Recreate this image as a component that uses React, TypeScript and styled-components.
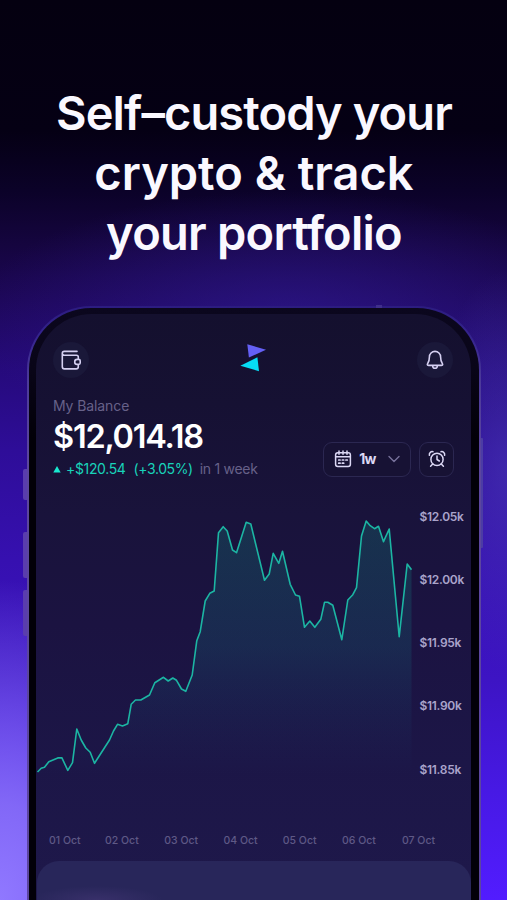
import React from "react";
import styled, { createGlobalStyle } from "styled-components";

const GlobalStyle = createGlobalStyle`
  * { box-sizing: border-box; }
  body {
    margin: 0;
    background: #040010;
    font-family: Inter, "Liberation Sans", sans-serif;
  }
`;

const Page = styled.main`
  width: 507px;
  height: 900px;
  overflow: hidden;
  display: flex;
  flex-direction: column;
  align-items: center;
  background:
    radial-gradient(ellipse 210px 320px at 0 900px, #9078ff 0%, rgba(136, 112, 248, 0.9) 30%, rgba(110, 80, 230, 0) 100%),
    radial-gradient(ellipse 80px 200px at 507px 470px, rgba(80, 70, 190, 0.45), rgba(80, 70, 190, 0)),
    radial-gradient(ellipse 320px 130px at 290px 320px, rgba(48, 26, 150, 0.65), rgba(48, 26, 150, 0)),
    linear-gradient(180deg, #040010 0, #050014 130px, #0b0228 190px, #15053f 245px, #1d0758 300px, #260a7c 370px, #2e0d98 450px, #3610b0 560px, #3d14c4 680px, #4719e4 790px, #521cff 900px);
`;

const Headline = styled.h1`
  margin: 83px 0 0;
  height: 223px;
  flex: none;
  display: flex;
  flex-direction: column;
  align-items: center;
  color: #faf8ff;
  font-size: 47px;
  font-weight: 600;
  line-height: 60px;
  white-space: nowrap;
`;

const HeadlineLine = styled.span<{ $spacing: number }>`
  padding-left: 1px;
  letter-spacing: ${(p) => p.$spacing}px;
`;

const Phone = styled.section`
  position: relative;
  width: 454px;
  height: 640px;
  flex: none;
  padding: 5.5px 7.5px 0;
  border: 2px solid transparent;
  border-bottom: 0;
  border-radius: 64px 64px 0 0;
  background:
    linear-gradient(180deg, #0b071e 0, #090518 60px, #020008 130px) padding-box,
    linear-gradient(180deg, #2c1c80 0, #35248e 30px, #4c3a9a 75px, #5c459f 160px) border-box;
`;

const SideKey = styled.i<{ $top: number; $height: number; $right?: boolean }>`
  position: absolute;
  top: ${(p) => p.$top}px;
  ${(p) => (p.$right ? "right: -4px;" : "left: -6px;")}
  width: ${(p) => (p.$right ? 2 : 4)}px;
  height: ${(p) => p.$height}px;
  border-radius: ${(p) => (p.$right ? "0 1px 1px 0" : "2px 0 0 2px")};
  background: ${(p) => (p.$right ? "#4c3ca4" : "#5a3dae")};
`;

const Antenna = styled.i`
  position: absolute;
  top: -3px;
  left: 347px;
  width: 6px;
  height: 3px;
  background: #3f2f8c;
`;

const Screen = styled.div`
  height: 100%;
  display: flex;
  flex-direction: column;
  overflow: hidden;
  border-radius: 56px 56px 0 0;
  background: linear-gradient(180deg, #14102e 0, #161133 90px, #19133b 200px, #1b1341 310px, #1c1647 450px, #1e184a 560px);
`;

const TopBar = styled.header`
  margin-top: 28px;
  padding: 0 18px 0 17px;
  height: 36px;
  display: flex;
  align-items: flex-end;
  justify-content: space-between;
`;

const RoundButton = styled.button`
  width: 36px;
  height: 36px;
  padding: 0;
  display: grid;
  place-items: center;
  border: 0;
  border-radius: 50%;
  background: #1a1839;
  color: #d5d0f2;
`;

const Summary = styled.div`
  height: 101.5px;
  padding: 19.5px 17px 0 17px;
  display: flex;
  justify-content: space-between;
`;

const Balance = styled.div`
  display: flex;
  flex-direction: column;
  white-space: nowrap;
`;

const Caption = styled.span`
  color: #676189;
  font-size: 14px;
  line-height: 18px;
  letter-spacing: -0.1px;
`;

const Amount = styled.strong`
  color: #fff;
  font-size: 32.5px;
  font-weight: 600;
  line-height: 38px;
  margin-top: 3px;
  letter-spacing: -1.25px;
`;

const Change = styled.div`
  margin-top: 4px;
  display: flex;
  align-items: center;
  color: #18d3ba;
  font-size: 14px;
  line-height: 18px;
`;

const Gain = styled.span<{ $gap: number; $spacing: number }>`
  margin-left: ${(p) => p.$gap}px;
  letter-spacing: ${(p) => p.$spacing}px;
`;

const Period = styled.span`
  margin-left: 7px;
  color: #676189;
  letter-spacing: -0.3px;
`;

const Controls = styled.div`
  display: flex;
  gap: 8px;
  padding-top: 44.5px;
`;

const ControlButton = styled.button<{ $width: number }>`
  width: ${(p) => p.$width}px;
  height: 35px;
  padding: 0;
  display: flex;
  align-items: center;
  justify-content: center;
  border: 1px solid #2b2751;
  border-radius: 9px;
  background: #171234;
  color: #dcd8f5;
  font: 700 14px/18px Inter, sans-serif;
`;

const RangeText = styled.span`
  margin: 0 12px 0 7px;
  letter-spacing: -0.6px;
`;

const ChartArea = styled.div`
  height: 330px;
  display: flex;
`;

const Plot = styled.svg`
  display: block;
  width: 376px;
  height: 330px;
  flex: none;
`;

const PriceAxis = styled.div`
  display: flex;
  flex-direction: column;
  padding: 28.5px 0 0 7.5px;
  color: #aaa4cb;
  font-size: 12px;
  font-weight: 600;
  line-height: 18px;
  letter-spacing: -0.3px;
  gap: 45.3px;
`;

const DateAxis = styled.div`
  display: flex;
  height: 52px;
  padding: 25px 0 0 13px;
  color: #5f5986;
  font-size: 10.5px;
  font-weight: 500;
  line-height: 14px;
  white-space: nowrap;
`;

const DateLabel = styled.span<{ $width: number }>`
  flex: 0 0 ${(p) => p.$width}px;
`;

const Sheet = styled.div`
  flex: 1;
  margin-left: 1px;
  border-radius: 22px 22px 0 0;
  background:
    radial-gradient(ellipse 65px 14px at 60px 39px, rgba(60, 50, 110, 0.8), rgba(60, 50, 110, 0)),
    #28265a;
`;

const line: [number, number][] = [
  [38, 772], [41.7, 768.3], [45, 767.3], [49.3, 761.7], [58.3, 757.9], [62.3, 757.7], [68.3, 770.3], [73, 762.7],
  [77.3, 729], [81.7, 740], [86.3, 748], [90.7, 752.3], [95, 763.3], [110, 740], [114, 731], [118, 724.3],
  [123, 726], [128.3, 723.7], [131.7, 704.3], [136, 700], [141.3, 700], [150, 695], [155.3, 682.7], [164, 677.3],
  [168.7, 681], [173.3, 678], [177, 680.3], [182, 689], [186.3, 691.3], [192.7, 675], [197.3, 640.7], [200.7, 631.7],
  [205.7, 601], [210.3, 593.3], [214.7, 591], [219, 532.7], [223.7, 526.7], [227.7, 531], [233, 550], [237, 552.7],
  [246.7, 522.2], [251.3, 524], [265, 580.3], [269.7, 574], [273.7, 553.3], [279.3, 563.3], [283, 551.3],
  [290.7, 584.3], [296, 595], [300, 596.3], [305, 627.3], [310.3, 621], [315.3, 627.3], [321.3, 619.3],
  [325, 602.3], [328.3, 602.3], [333.3, 605.3], [342.3, 639.7], [348.3, 600], [353.3, 594.7], [357, 587.7],
  [362, 536], [366.7, 521], [370.7, 525.7], [375, 528.7], [379, 526.3], [384, 541.7], [389.7, 529], [399.7, 636.7],
  [407.7, 564], [412, 569.7],
];

const linePoints = line.map(([x, y]) => `${x},${y}`).join(" ");

const prices = ["$12.05k", "$12.00k", "$11.95k", "$11.90k", "$11.85k"];

const dates: [string, number][] = [
  ["01 Oct", 56], ["02 Oct", 59.3], ["03 Oct", 59.2], ["04 Oct", 59.3], ["05 Oct", 59.2], ["06 Oct", 60], ["07 Oct", 50],
];

const stroke = { fill: "none", stroke: "currentColor", strokeLinecap: "round", strokeLinejoin: "round" } as const;

const WalletIcon = () => (
  <svg width="22" height="22" viewBox="0 0 22 22" {...stroke} strokeWidth="1.6">
    <path d="M17 2.4H4.2a1.9 1.9 0 0 0 0 3.8h12.3a1.8 1.8 0 0 1 1.8 1.8v1.6M2.3 4.3v13.4a2.2 2.2 0 0 0 2.2 2.2h11.6a2.2 2.2 0 0 0 2.2-2.2v-1.6" />
    <path d="M18.6 10.4h-1.4a2.5 2.5 0 0 0 0 5h1.4c1.1 0 1.6-.5 1.6-1.3v-2.4c0-.8-.5-1.3-1.6-1.3z" />
  </svg>
);

const BellIcon = () => (
  <svg width="20" height="22" viewBox="0 0 20 22" {...stroke} strokeWidth="1.6">
    <path d="M10 2.4a5.6 5.6 0 0 0-5.6 5.6c0 3.5-.7 5.1-1.7 6.4-.8 1.1-.2 2 1 2h12.6c1.2 0 1.8-.9 1-2-1-1.3-1.7-2.9-1.7-6.4A5.6 5.6 0 0 0 10 2.4z" />
    <path d="M7.7 16.9a2.3 2.3 0 0 0 4.6 0" />
  </svg>
);

const LogoMark = styled.svg`
  width: 26px;
  height: 30px;
  margin-bottom: 6px;
`;

const Logo = () => (
  <LogoMark viewBox="0 0 26 30">
    <path d="M7.3 2.2 26 7.8 8.9 15.4z" fill="#6460f5" />
    <path d="M17.4 15.3 19 29.2.4 23.7z" fill="#06dcf5" />
  </LogoMark>
);

const CalendarIcon = () => (
  <svg width="18" height="18" viewBox="0 0 18 18" {...stroke} strokeWidth="1.5">
    <rect x="1.6" y="2.8" width="14.8" height="13.6" rx="2.2" />
    <path d="M1.8 6.8h14.4M5 1v3.2M9 1v3.2M13 1v3.2" />
    <path d="M4.7 10h1.4M8.3 10h1.4M11.9 10h1.4M4.7 13.2h1.4M8.3 13.2h1.4" strokeWidth="1.7" />
  </svg>
);

const ChevronIcon = () => (
  <svg width="12" height="8" viewBox="0 0 12 8" {...stroke} strokeWidth="1.4">
    <path d="m1 1.5 5 5 5-5" stroke="#77719b" />
  </svg>
);

const AlarmIcon = () => (
  <svg width="18" height="18" viewBox="0 0 18 18" {...stroke} strokeWidth="1.5">
    <circle cx="9" cy="9.4" r="6.1" />
    <path d="M9 6v3.5l2.3 1.5M1.4 5.3A3 3 0 0 1 5 1.7M16.6 5.3A3 3 0 0 0 13 1.7M4.7 14l-2.1 2.3M13.3 14l2.1 2.3" />
  </svg>
);

export default function App() {
  return (
    <>
      <GlobalStyle />
      <Page>
        <Headline>
          <HeadlineLine $spacing={-0.9}>Self–custody your</HeadlineLine>
          <HeadlineLine $spacing={0}>crypto &amp; track</HeadlineLine>
          <HeadlineLine $spacing={-0.75}>your portfolio</HeadlineLine>
        </Headline>
        <Phone>
          <Antenna />
          <SideKey $top={161} $height={31} />
          <SideKey $top={224} $height={46} />
          <SideKey $top={282} $height={46} />
          <SideKey $top={130} $height={110} $right />
          <Screen>
            <TopBar>
              <RoundButton aria-label="Wallet"><WalletIcon /></RoundButton>
              <Logo />
              <RoundButton aria-label="Notifications"><BellIcon /></RoundButton>
            </TopBar>
            <Summary>
              <Balance>
                <Caption>My Balance</Caption>
                <Amount>$12,014.18</Amount>
                <Change>
                  <svg width="8" height="7" viewBox="0 0 8 7"><path d="M4 0 7.7 6.6H.3z" fill="#18e8cf" /></svg>
                  <Gain $gap={5} $spacing={-0.35}>+$120.54</Gain>
                  <Gain $gap={8} $spacing={-0.4}>(+3.05%)</Gain>
                  <Period>in 1 week</Period>
                </Change>
              </Balance>
              <Controls>
                <ControlButton $width={88}>
                  <CalendarIcon />
                  <RangeText>1w</RangeText>
                  <ChevronIcon />
                </ControlButton>
                <ControlButton $width={35} aria-label="Alerts"><AlarmIcon /></ControlButton>
              </Controls>
            </Summary>
            <ChartArea>
              <Plot viewBox="36.5 479 376 330">
                <defs>
                  <linearGradient id="area" gradientUnits="userSpaceOnUse" x1="0" y1="520" x2="0" y2="775">
                    <stop offset="0" stopColor="#12a28e" stopOpacity="0.22" />
                    <stop offset="0.5" stopColor="#129a98" stopOpacity="0.16" />
                    <stop offset="1" stopColor="#1c60a0" stopOpacity="0" />
                  </linearGradient>
                </defs>
                <polygon points={`38,775 ${linePoints} 412,775`} fill="url(#area)" />
                <polyline points={linePoints} fill="none" stroke="#1cb5a3" strokeWidth="1.6" strokeLinejoin="round" />
              </Plot>
              <PriceAxis>
                {prices.map((label) => (
                  <span key={label}>{label}</span>
                ))}
              </PriceAxis>
            </ChartArea>
            <DateAxis>
              {dates.map(([label, width]) => (
                <DateLabel key={label} $width={width}>{label}</DateLabel>
              ))}
            </DateAxis>
            <Sheet />
          </Screen>
        </Phone>
      </Page>
    </>
  );
}
